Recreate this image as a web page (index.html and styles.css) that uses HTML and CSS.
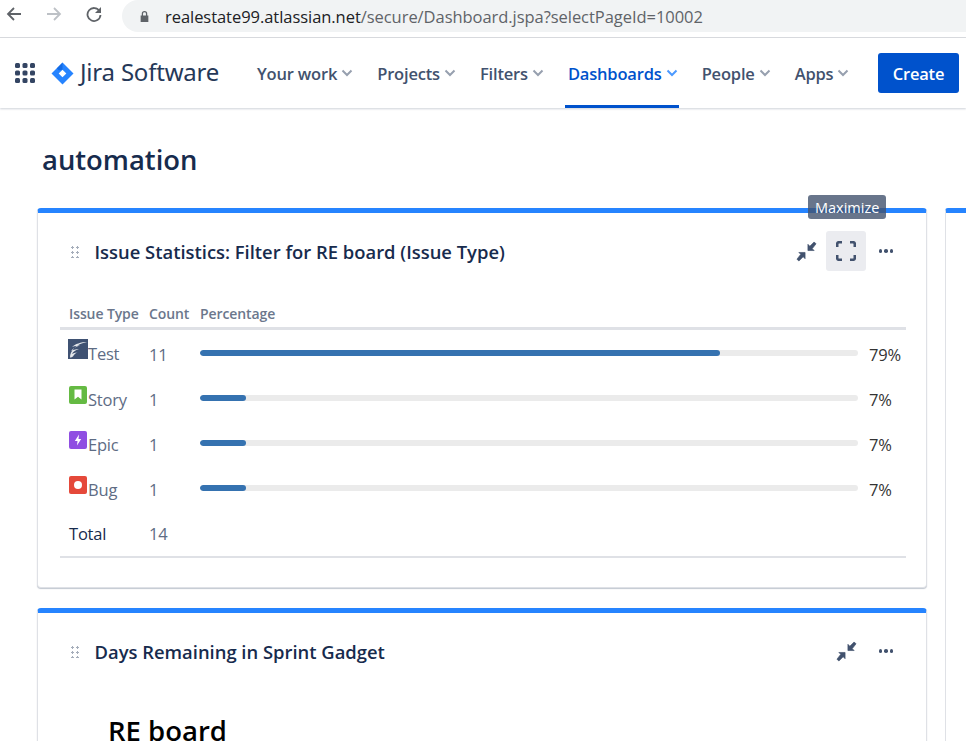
FILE: index.html
```html
<!DOCTYPE html>
<html lang="en">
<head>
  <meta charset="UTF-8" />
  <title>automation - Jira</title>
  <link rel="stylesheet" href="styles.css">
</head>
<body>
  <div class="browser-bar">
    <svg class="browser-icon" viewBox="0 0 16 16"><path d="M15 8H2M8 2L2 8l6 6" fill="none" stroke="#5f6368" stroke-width="1.8"/></svg>
    <svg class="browser-icon" viewBox="0 0 16 16"><path d="M1 8h13M8 2l6 6-6 6" fill="none" stroke="#bdc1c6" stroke-width="1.8"/></svg>
    <svg class="browser-icon" viewBox="0 0 16 16"><path d="M13.6 5.2A6.5 6.5 0 1 0 14.5 9" fill="none" stroke="#5f6368" stroke-width="1.8"/><path d="M15 1v6H9z" fill="#5f6368"/></svg>
    <div class="address">
      <svg class="lock" viewBox="0 0 12 14"><path d="M3 6V4a3 3 0 0 1 6 0v2h1.2v7H1.8V6zm1.4 0h3.2V4a1.6 1.6 0 0 0-3.2 0z" fill="#5f6368"/></svg>
      <span class="host">realestate99.atlassian.net</span><span class="path">/secure/Dashboard.jspa?selectPageId=10002</span>
    </div>
  </div>

  <header class="topnav">
    <svg class="apps" viewBox="0 0 20 20">
      <g fill="#344563">
        <rect x="0" y="0" width="5" height="5" rx="1.5"/><rect x="7.5" y="0" width="5" height="5" rx="1.5"/><rect x="15" y="0" width="5" height="5" rx="1.5"/>
        <rect x="0" y="7.5" width="5" height="5" rx="1.5"/><rect x="7.5" y="7.5" width="5" height="5" rx="1.5"/><rect x="15" y="7.5" width="5" height="5" rx="1.5"/>
        <rect x="0" y="15" width="5" height="5" rx="1.5"/><rect x="7.5" y="15" width="5" height="5" rx="1.5"/><rect x="15" y="15" width="5" height="5" rx="1.5"/>
      </g>
    </svg>
    <svg class="logo" viewBox="0 0 24 24">
      <path d="M12 0.5L23.5 12 12 23.5 0.5 12z" fill="#2684ff"/>
      <path d="M12 8l4 4-4 4-4-4z" fill="#fff"/>
      <path d="M12 0.5L6 6.5 8 8.5 12 8z" fill="#0052cc" opacity="0.5"/>
    </svg>
    <span class="brand">Jira Software</span>
    <nav class="menu">
      <a class="menu-item">Your work<svg class="caret" viewBox="0 0 12 8"><path d="M1.5 1.5L6 6l4.500-4.500"/></svg></a>
      <a class="menu-item">Projects<svg class="caret" viewBox="0 0 12 8"><path d="M1.5 1.5L6 6l4.500-4.500"/></svg></a>
      <a class="menu-item">Filters<svg class="caret" viewBox="0 0 12 8"><path d="M1.5 1.5L6 6l4.500-4.500"/></svg></a>
      <a class="menu-item active">Dashboards<svg class="caret" viewBox="0 0 12 8"><path d="M1.5 1.5L6 6l4.500-4.500"/></svg></a>
      <a class="menu-item">People<svg class="caret" viewBox="0 0 12 8"><path d="M1.5 1.5L6 6l4.500-4.500"/></svg></a>
      <a class="menu-item">Apps<svg class="caret" viewBox="0 0 12 8"><path d="M1.5 1.5L6 6l4.500-4.500"/></svg></a>
    </nav>
    <button class="create">Create</button>
  </header>

  <main class="dashboard">
    <h1 class="page-title">automation</h1>
    <div class="columns">
      <div class="col-main">
        <section class="gadget gadget-stats">
          <div class="gadget-head">
            <span class="drag"></span>
            <h2>Issue Statistics: Filter for RE board (Issue Type)</h2>
            <div class="gadget-tools">
              <span class="tool"><svg viewBox="0 0 22 22"><use href="#collapse"/></svg></span>
              <span class="tool hover"><svg viewBox="0 0 20 20"><path d="M1.2 6V3a1.800 1.800 0 0 1 1.800-1.800h3M14 1.200h3A1.800 1.800 0 0 1 18.800 3v3M18.800 14v3a1.800 1.800 0 0 1-1.800 1.800h-3M6 18.800H3A1.800 1.800 0 0 1 1.200 17v-3" fill="none" stroke="#42526e" stroke-width="2.600"/></svg></span>
              <span class="tool more"><i></i><i></i><i></i></span>
            </div>
          </div>
          <table class="stats">
            <colgroup>
              <col class="col-type"><col class="col-count"><col class="col-bar"><col class="col-pct">
            </colgroup>
            <thead>
              <tr><th>Issue Type</th><th>Count</th><th colspan="2">Percentage</th></tr>
            </thead>
            <tbody>
              <tr>
                <td class="type"><svg class="type-icon test-icon" viewBox="0 0 20 20"><rect width="20" height="20" fill="#3f5273"/><path d="M19 3C13 3 7 5 4 8c3-1 6-1.500 8-1.500C9 7.500 5 9 3 12c3-1.500 6-2 8-2-3 1-6 2.500-7 5 2-1 5-1.500 6-2-2 1-4 2-5 4.500-.5.500-2 1-3 1C2 12 8 5 19 3z" fill="#e4e7eb"/></svg>Test</td>
                <td>11</td>
                <td class="bar-cell"><div class="bar"><div class="bar-fill" style="width:79%"></div></div></td>
                <td class="pct">79%</td>
              </tr>
              <tr>
                <td class="type"><svg class="type-icon" viewBox="0 0 18 18"><rect width="18" height="18" rx="2" fill="#65ba43"/><path d="M5.500 3.500h7v10L9 10.800l-3.500 2.700z" fill="#fff"/></svg>Story</td>
                <td>1</td>
                <td class="bar-cell"><div class="bar"><div class="bar-fill" style="width:7%"></div></div></td>
                <td class="pct">7%</td>
              </tr>
              <tr>
                <td class="type"><svg class="type-icon" viewBox="0 0 18 18"><rect width="18" height="18" rx="2" fill="#904ee2"/><path d="M10 3.500L5.800 10h2.700L8 14.500 12.200 8H9.500z" fill="#fff"/></svg>Epic</td>
                <td>1</td>
                <td class="bar-cell"><div class="bar"><div class="bar-fill" style="width:7%"></div></div></td>
                <td class="pct">7%</td>
              </tr>
              <tr>
                <td class="type"><svg class="type-icon" viewBox="0 0 18 18"><rect width="18" height="18" rx="2" fill="#e5493a"/><circle cx="9" cy="9" r="4" fill="#fff"/></svg>Bug</td>
                <td>1</td>
                <td class="bar-cell"><div class="bar"><div class="bar-fill" style="width:7%"></div></div></td>
                <td class="pct">7%</td>
              </tr>
              <tr class="total">
                <td>Total</td>
                <td class="total-count">14</td>
                <td colspan="2"></td>
              </tr>
            </tbody>
          </table>
          <div class="tooltip">Maximize</div>
        </section>

        <section class="gadget gadget-sprint">
          <div class="gadget-head">
            <span class="drag"></span>
            <h2>Days Remaining in Sprint Gadget</h2>
            <div class="gadget-tools">
              <span class="tool"><svg viewBox="0 0 22 22"><use href="#collapse"/></svg></span>
              <span class="tool more"><i></i><i></i><i></i></span>
            </div>
          </div>
          <h3 class="board-name">RE board</h3>
        </section>
      </div>
      <div class="col-side"></div>
    </div>
  </main>

  <svg class="defs" width="0" height="0">
    <defs>
      <g id="collapse" fill="#42526e" stroke="#42526e" stroke-width="0.7">
        <path d="M21 3l-2-2-4.500 4.500L12.500 3.500V10H19l-2-2z"/>
        <path d="M1 19l2 2 4.500-4.500 2 2V12H3l2 2z"/>
      </g>
    </defs>
  </svg>
</body>
</html>
```

FILE: styles.css
```css
html, body {
  height: 741px;
  overflow: hidden;
}

body {
  margin: 0;
  font-family: "Open Sans", "Noto Sans", sans-serif;
  background-color: #fff;
  color: #172b4d;
}

/* browser chrome */
.browser-bar {
  display: flex;
  align-items: flex-start;
  height: 37px;
  border-bottom: 1px solid #dadce0;
  background: #fff;
}

.browser-icon {
  width: 16px;
  height: 16px;
  margin: 6px 0 0 6px;
  flex: none;
}

.browser-icon + .browser-icon {
  margin-left: 24px;
}

.address {
  flex: 1;
  display: flex;
  align-items: center;
  height: 32px;
  margin-left: 20px;
  padding-left: 17px;
  background: #f1f3f4;
  border-radius: 16px 0 0 16px;
  font-size: 16.500px;
  letter-spacing: -0.05px;
}

.lock {
  width: 11px;
  height: 13px;
  margin-right: 15px;
}

.host {
  color: #202124;
}

.path {
  color: #5f6368;
}

/* jira nav */
.topnav {
  display: flex;
  align-items: center;
  height: 70px;
  padding: 0 7px 0 15px;
  background: #fff;
  box-shadow: 0 1px 2px rgba(9, 30, 66, 0.2);
  position: relative;
}

.apps {
  width: 20px;
  height: 20px;
}

.logo {
  width: 23px;
  height: 23px;
  margin-left: 16px;
}

.brand {
  margin-left: 6px;
  padding-bottom: 4px;
  width: 165px;
  font-family: "Noto Sans", sans-serif;
  font-size: 24px;
  color: #253858;
  letter-spacing: -0.2px;
}

.menu {
  display: flex;
  flex: 1;
  height: 100%;
}

.menu-item {
  display: flex;
  align-items: center;
  height: 100%;
  box-sizing: border-box;
  padding: 0 3px;
  margin: 0 9px;
  font-size: 16.500px;
  font-weight: 600;
  color: #42526e;
  letter-spacing: -0.18px;
  position: relative;
}

.menu-item.active {
  color: #0052cc;
}

.menu-item.active::after {
  content: "";
  position: absolute;
  left: 0;
  right: 2px;
  bottom: 0;
  height: 3px;
  background: #0052cc;
}

.caret {
  width: 12px;
  height: 8px;
  margin-left: 4px;
  fill: none;
  stroke: #97a0af;
  stroke-width: 2;
}

.menu-item.active .caret {
  stroke: #4c9aff;
}

.create {
  width: 81px;
  height: 40px;
  background-color: #0052cc;
  color: #fff;
  border: none;
  border-radius: 3px;
  font-family: inherit;
  font-size: 16.500px;
  font-weight: 600;
  letter-spacing: -0.2px;
}

/* dashboard */
.dashboard {
  padding: 0 0 0 37px;
}

.page-title {
  margin: 0;
  padding: 33px 0 0 5px;
  height: 100px;
  box-sizing: border-box;
  font-size: 27.400px;
  line-height: 38px;
  font-weight: 600;
  color: #172b4d;
}

.columns {
  display: flex;
  gap: 18px;
}

.col-main {
  width: 890px;
  flex: none;
}

.col-side {
  flex: 1;
  height: 600px;
  background: #fff;
  border: 1px solid #dfe1e6;
  border-top: 5px solid #2684ff;
  border-right: none;
  border-radius: 3px 0 0 0;
}

.gadget {
  position: relative;
  box-sizing: border-box;
  background: #fff;
  border: 1px solid #dfe1e6;
  border-top: 5px solid #2684ff;
  border-radius: 4px;
  box-shadow: 0 1px 1px rgba(9, 30, 66, 0.25);
}

.gadget-stats {
  height: 380px;
  margin-bottom: 20px;
}

.gadget-sprint {
  height: 300px;
}

.gadget-head {
  display: flex;
  align-items: center;
  height: 40px;
  margin-top: 18px;
  padding: 0 20px 0 32px;
}

.gadget-head h2 {
  flex: 1;
  margin: 0 0 0 15.500px;
  font-size: 18.400px;
  font-weight: 600;
  color: #172b4d;
}

.drag {
  width: 9px;
  height: 13px;
  background-image: radial-gradient(circle, #a5adba 1.2px, transparent 1.4px);
  background-size: 5px 5px;
}

.gadget-tools {
  display: flex;
  align-items: center;
}

.tool {
  display: flex;
  align-items: center;
  justify-content: center;
  width: 40px;
  height: 40px;
  border-radius: 3px;
}

.tool svg {
  width: 21px;
  height: 21px;
}

.tool.hover svg {
  width: 20px;
  height: 20px;
}

.tool.hover {
  background: #ebecf0;
}

.tool.more {
  gap: 2px;
}

.tool.more i {
  width: 3.500px;
  height: 3.500px;
  border-radius: 50%;
  background: #42526e;
}

.stats {
  width: 846px;
  margin: 28px 0 0 22px;
  border-collapse: collapse;
  table-layout: fixed;
  border-bottom: 2px solid #dfe1e6;
}

.col-type { width: 80px; }
.col-count { width: 51px; }
.col-bar { width: 667px; }
.col-pct { width: 48px; }

.stats th {
  height: 28px;
  padding: 0 0 0 9px;
  text-align: left;
  font-size: 14px;
  font-weight: 600;
  color: #6b778c;
  letter-spacing: -0.1px;
  border-bottom: 3px solid #dfe1e6;
}

.stats td {
  box-sizing: border-box;
  height: 45px;
  padding: 0 0 0 9px;
  font-size: 16.500px;
  color: #5e6c84;
  letter-spacing: -0.2px;
}

.stats td.type {
  white-space: nowrap;
  padding-bottom: 2px;
}

.type-icon {
  width: 18px;
  height: 18px;
  vertical-align: 2px;
  margin-right: 1px;
}

.type-icon.test-icon {
  width: 20px;
  height: 20px;
  margin: 0 0 0 -1px;
  vertical-align: 1px;
}

.bar {
  height: 6px;
  margin-top: -3px;
  background: #ebebeb;
  border-radius: 3px;
  overflow: hidden;
}

.bar-fill {
  height: 100%;
  background: #3572b0;
  border-radius: 3px;
}

.stats td.pct {
  padding: 0 0 0 11px;
  color: #333;
}

.stats tbody tr:first-child td {
  height: 48px;
  padding-top: 2px;
}

.stats tbody tr:first-child td.type {
  padding-top: 0;
}

.stats .total td {
  height: 45px;
  color: #172b4d;
}

.stats .total td.total-count {
  color: #5e6c84;
}

.tooltip {
  position: absolute;
  top: -18px;
  left: 770px;
  padding: 0 7px;
  height: 24px;
  line-height: 25px;
  font-size: 14.500px;
  color: #fff;
  background: rgba(66, 82, 110, 0.8);
  border-radius: 3px;
}

.board-name {
  margin: 41px 0 0 70px;
  font-size: 27.500px;
  font-weight: 600;
  color: #000;
}

.defs {
  position: absolute;
}
```
